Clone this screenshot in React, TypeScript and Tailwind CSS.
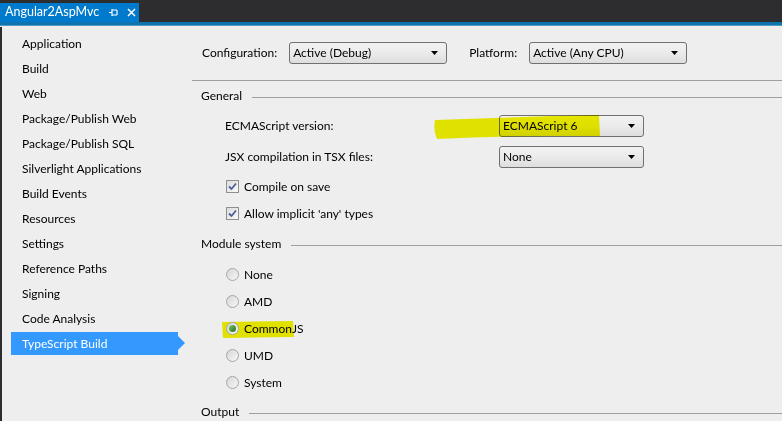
import React from 'react';

// Project properties page (VS 2015 style) with the TypeScript Build tab open
const sideItems = [
  'Application',
  'Build',
  'Web',
  'Package/Publish Web',
  'Package/Publish SQL',
  'Silverlight Applications',
  'Build Events',
  'Resources',
  'Settings',
  'Reference Paths',
  'Signing',
  'Code Analysis',
  'TypeScript Build',
];

const modules = ['None', 'AMD', 'CommonJS', 'UMD', 'System'];

const ComboBox: React.FC<{ value: string; width: string }> = ({ value, width }) => (
  <div
    className={`${width} relative flex h-[22px] items-center rounded-[3px] border border-[#707070] bg-gradient-to-b from-[#f2f2f2] via-[#ebebeb] to-[#dddddd] pl-[3px] text-[12px] text-black`}
  >
    <span>{value}</span>
    <svg className="absolute right-[8px] top-[8px]" width="7" height="4" viewBox="0 0 7 4">
      <path d="M0 0h7L3.5 4z" fill="#000" />
    </svg>
  </div>
);

const CheckBox: React.FC<{ label: string }> = ({ label }) => (
  <div className="flex h-[27px] items-center pl-[34px]">
    <div className="flex h-[13px] w-[13px] items-center justify-center border border-[#8e8f8f] bg-gradient-to-br from-[#dcdcdc] to-[#fafafa]">
      <svg width="9" height="9" viewBox="0 0 9 9">
        <path d="M1 4.5 L3.5 7 L8 1.5" stroke="#4a5f97" strokeWidth="1.8" fill="none" />
      </svg>
    </div>
    <span className="ml-[5px]">{label}</span>
  </div>
);

const Radio: React.FC<{ label: string; checked?: boolean }> = ({ label, checked }) => (
  <div className="relative flex h-[27px] items-center pl-[34px]">
    {checked && (
      <svg className="absolute left-[29px] top-[5px] mix-blend-multiply" width="74" height="19" viewBox="0 0 74 19">
        <path d="M1 2 L72 1 L73 17 L2 18 Z" fill="#f2f200" />
      </svg>
    )}
    <div className="relative flex h-[13px] w-[13px] items-center justify-center rounded-full border border-[#a6a6a6] bg-gradient-to-br from-[#d6d6d6] to-[#f8f8f8]">
      {checked && <div className="h-[7px] w-[7px] rounded-full bg-gradient-to-br from-[#7ecb5e] to-[#1d6b1d]" />}
    </div>
    <span className="relative ml-[5px]">{label}</span>
  </div>
);

const Section: React.FC<{ title: string; height: string }> = ({ title, height }) => (
  <div className={`flex ${height} items-center pl-[9px]`}>
    <span>{title}</span>
    <div className="ml-[10px] mt-[2px] h-px flex-1 bg-[#a0a0a0]" />
  </div>
);

export default function App() {
  return (
    <div
      className="flex h-[421px] w-[782px] flex-col overflow-hidden bg-[#2d2d30] text-[12px] text-black"
      style={{ fontFamily: 'Lato, "Open Sans", sans-serif' }}
    >
      {/* document tab strip */}
      <div className="flex h-[22px] shrink-0 items-end">
        <div className="flex h-[19px] w-[139px] items-center bg-[#007acc] pl-[5px] text-white">
          <span className="text-[12.5px]">Angular2AspMvc</span>
          <svg className="ml-[10px]" width="9" height="9" viewBox="0 0 9 9">
            <path d="M0 4.5h3M3 1v7M3 2h5M3 7h5M8 2v5" stroke="#fff" strokeWidth="1.2" fill="none" />
          </svg>
          <svg className="ml-[9px]" width="9" height="9" viewBox="0 0 9 9">
            <path d="M1 1l7 7M8 1l-7 7" stroke="#fff" strokeWidth="1.5" />
          </svg>
        </div>
      </div>
      <div className="h-[3px] shrink-0 bg-[#0f73b0]" />
      <div className="h-px shrink-0 bg-[#4d9cc9]" />
      <div className="h-px shrink-0 bg-[#fbe9e2]" />

      <div className="ml-[2px] flex min-h-0 flex-1 overflow-hidden bg-[#eeeeef]">
        {/* left nav */}
        <div className="flex w-[190px] shrink-0 flex-col pl-[9px] pt-[4px]">
          {sideItems.map((item) => {
            const active = item === 'TypeScript Build';
            return (
              <div key={item} className="flex h-[25px] shrink-0 items-center">
                {active ? (
                  <div className="relative flex h-[23px] w-[167px] items-center bg-[#3399ff] pl-[11px] text-white">
                    {item}
                    <div className="absolute right-[-7px] top-[4px] h-0 w-0 border-y-[7px] border-l-[7px] border-y-transparent border-l-[#3399ff]" />
                  </div>
                ) : (
                  <span className="pl-[11px]">{item}</span>
                )}
              </div>
            );
          })}
        </div>

        {/* property page */}
        <div className="flex flex-1 flex-col">
          <div className="flex h-[54px] shrink-0 items-center border-b border-[#a0a0a0] pb-[2px] pl-[10px]">
            <span>Configuration:</span>
            <div className="ml-[12px]">
              <ComboBox value="Active (Debug)" width="w-[158px]" />
            </div>
            <span className="ml-[22px]">Platform:</span>
            <div className="ml-[12px]">
              <ComboBox value="Active (Any CPU)" width="w-[158px]" />
            </div>
          </div>

          <div className="shrink-0">
            <Section title="General" height="h-[30px]" />
            <div className="relative flex h-[29px] items-center pl-[33px]">
              <span className="w-[274px]">ECMAScript version:</span>
              <ComboBox value="ECMAScript 6" width="w-[145px]" />
              <svg className="absolute left-[241px] top-[3px] mix-blend-multiply" width="170" height="26" viewBox="0 0 170 26">
                <path d="M2 6 Q60 4 120 2 L166 1 L167 22 L120 22 Q60 22 4 25 Q0 16 2 6 Z" fill="#f2f200" />
              </svg>
            </div>
            <div className="flex h-[33px] items-center pl-[33px]">
              <span className="w-[274px]">JSX compilation in TSX files:</span>
              <ComboBox value="None" width="w-[145px]" />
            </div>
            <CheckBox label="Compile on save" />
            <CheckBox label="Allow implicit 'any' types" />
          </div>

          <div className="shrink-0">
            <Section title="Module system" height="h-[34px]" />
            {modules.map((m) => (
              <Radio key={m} label={m} checked={m === 'CommonJS'} />
            ))}
            <Section title="Output" height="h-[32px]" />
          </div>
        </div>
      </div>
    </div>
  );
}
